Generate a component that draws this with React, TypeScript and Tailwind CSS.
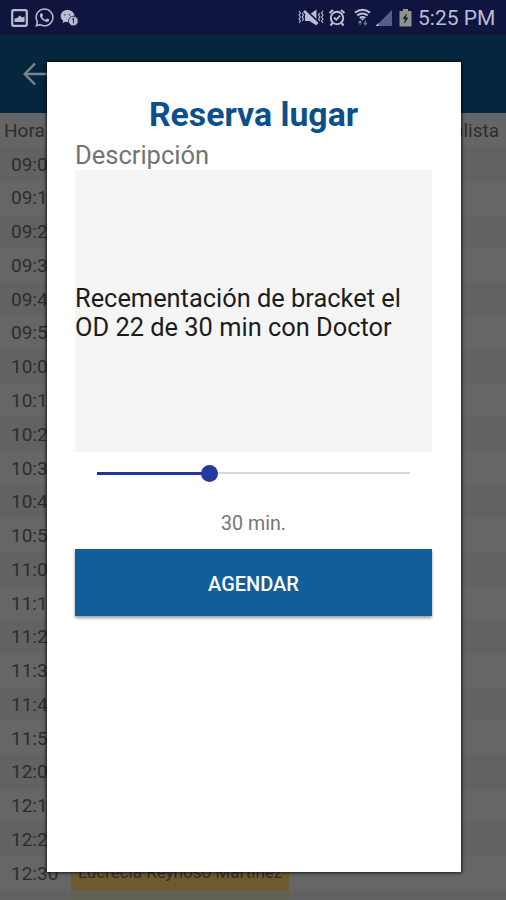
import { useState } from "react";
import { FaWhatsapp } from "react-icons/fa";
import { clsx } from "clsx";

const hours = ["09", "10", "11", "12"];
const minutes = ["00", "10", "20", "30", "40", "50"];

const slots = hours
  .flatMap((hour) => minutes.map((minute) => `${hour}:${minute}`))
  .slice(0, 23);

const appointments: Record<string, string> = {
  "12:30": "Lucrecia Reynoso Martínez",
};

function StatusBar() {
  return (
    <header className="flex h-[35px] shrink-0 items-center bg-[#10153f] pr-[10px] pl-[11px] text-[#b9bdd2]">
      <svg width="17" height="18" viewBox="0 0 17 18" fill="none">
        <rect x="1.2" y="1.2" width="14.6" height="15.6" rx="1.5" stroke="currentColor" strokeWidth="2.2" />
        <path d="M3.5 13V9.500l2.500-.5L9 6.500l2 2 2.500-1V13z" fill="currentColor" />
      </svg>
      <FaWhatsapp className="ml-[6px] size-[21px]" />
      <svg className="ml-[5px]" width="19" height="18" viewBox="0 0 19 18">
        <path
          d="M7.5 1C3.5 1 .7 3.6.7 7c0 2 .9 3.5 2.4 4.6L2.5 14l2.8-1.3c.8.2 1.5.3 2.3.3 4 0 6.9-2.7 6.9-6S11.500 1 7.500 1z"
          fill="currentColor"
        />
        <circle cx="13.300" cy="12" r="4.800" fill="currentColor" stroke="#383d62" strokeWidth="1" />
        <path d="M12.300 10.500l1.200-1v5" fill="none" stroke="#383d62" strokeWidth="1.200" />
        <path d="M5 5v1.500M9.500 5v1.500" fill="none" stroke="#383d62" strokeWidth="1.200" />
      </svg>

      <svg className="ml-auto" width="28" height="20" viewBox="0 0 28 20" fill="none" stroke="currentColor">
        <path
          d="M2 3l1.500 2L2 7l1.500 2L2 11l1.500 2L2 15M5.200 5l1.300 2-1.300 2 1.300 2-1.300 2M26 3l-1.500 2L26 7l-1.500 2 1.500 2-1.500 2 1.500 2M22.800 5l-1.300 2 1.300 2-1.300 2 1.300 2"
          strokeWidth="1.100"
        />
        <path d="M8 6.500h4.500L19.500 1.500v16L12.500 13H8z" fill="currentColor" stroke="none" />
        <path d="M9.500 3l13 12" stroke="#10153f" strokeWidth="2" />
        <path d="M7 3l13.500 13" strokeWidth="2.800" />
      </svg>
      <svg className="ml-[3px]" width="18" height="19" viewBox="0 0 18 19" fill="none" stroke="currentColor">
        <circle cx="9" cy="10" r="6.200" strokeWidth="2" />
        <path d="M1.500 5L5 2M16.500 5L13 2M4.500 15l-2 2.500M13.500 15l2 2.500" strokeWidth="2.200" />
        <path d="M6 9.500l2.300 2.200 3.800-4" strokeWidth="1.800" />
      </svg>
      <svg className="ml-[8px]" width="17" height="19" viewBox="0 0 18 19" fill="none" stroke="currentColor">
        <path
          d="M1 4.300c5-3.700 11-3.700 16 0M3.500 7.200c3.500-2.500 7.500-2.500 11 0M6 10c1.800-1.300 4.200-1.300 6 0"
          strokeWidth="2.100"
        />
        <path d="M7 10.500h4L9 13z" fill="currentColor" stroke="none" />
        <path d="M6.500 13v4.500M4.500 15.500l2-2.500 1.500 2M12 12.500V17M10.500 15.200l1.500 2 1.500-2" stroke="#747a9c" strokeWidth="1.200" />
      </svg>
      <svg className="ml-[4px]" width="18" height="18" viewBox="0 0 18 18">
        <path d="M17 1v16H1z" fill="#585d83" />
        <path d="M3.500 14V17H.500z" fill="currentColor" />
      </svg>
      <svg className="ml-[6px]" width="13" height="18" viewBox="0 0 13 18">
        <path d="M4 0h5v2h3.500v15.500H.500V2H4z" fill="#8e9290" />
        <path d="M8 4L3.500 10H6l-1 5 4.500-6.500H7z" fill="#171b3b" />
      </svg>
      <time className="ml-[6px] w-[78px] pt-px text-[21px] leading-none whitespace-nowrap">5:25 PM</time>
    </header>
  );
}

function Toolbar() {
  return (
    <nav className="flex h-[78px] shrink-0 items-center bg-[#05263f] pl-[23px] text-[#7c8584]">
      <svg width="28" height="24" viewBox="0 0 28 24" fill="none" stroke="currentColor" strokeWidth="2.500">
        <path d="M12 1.500L1.800 12 12 22.500M2 12h26" />
      </svg>
    </nav>
  );
}

function Schedule() {
  return (
    <main className="bg-[#656565] text-[19px] text-[#2d2d2d]">
      <div className="flex h-[34px] items-center justify-between pt-[2px] pr-[7px] pl-1">
        <span>Hora</span>
        <span>Especialista</span>
      </div>
      {slots.map((slot, index) => (
        <div
          key={slot}
          className={clsx(
            "flex h-[33.77px] items-center pl-[11px]",
            index % 2 === 0 ? "bg-[#626262]" : "bg-[#666666]",
          )}
        >
          <span className="w-[60px] pt-[2px]">{slot}</span>
          {appointments[slot] && (
            <span className="flex h-full w-[218px] items-center bg-[#6f5a30] pl-[7px] text-[17px] whitespace-nowrap">
              {appointments[slot]}
            </span>
          )}
          {slot === "12:40" && <span className="h-full w-[218px] bg-[#606253]" />}
        </div>
      ))}
    </main>
  );
}

function DurationSlider(props: { value: number; onChange: (value: number) => void }) {
  const percent = ((props.value - 10) / 55.5) * 100;

  return (
    <label className="relative mx-[22px] flex h-[42px] items-center">
      <span className="h-[3px] bg-[#22359a]" style={{ width: `${percent}%` }} />
      <span className="relative z-10 -mr-[8.5px] -ml-[8.5px] size-[17px] shrink-0 rounded-full bg-[#2736a0]" />
      <span className="h-[2px] flex-1 bg-[#d7d7d7]" />
      <input
        type="range"
        min={10}
        max={65}
        value={props.value}
        onChange={(event) => props.onChange(Number(event.target.value))}
        className="absolute inset-0 z-20 cursor-pointer opacity-0"
      />
    </label>
  );
}

function BookingDialog() {
  const [duration, setDuration] = useState(30);

  return (
    <section className="absolute top-[62px] left-[46.5px] flex h-[810px] w-[414px] flex-col bg-white px-[28.5px] pt-[33px] shadow-[0_0_3px_1px_rgba(0,0,0,0.75)]">
      <h1 className="text-center text-[33.8px] leading-[40px] font-bold text-[#0b4f8c]">
        Reserva lugar
      </h1>
      <h2 className="mt-[5px] text-[25.5px] leading-[30px] text-[#737373]">Descripción</h2>
      <p className="flex h-[282px] items-center bg-[#f5f5f5] pt-[4px] text-[25.4px] leading-[29.5px] text-[#1c1c1c]">
        Recementación de bracket el OD 22 de 30 min con Doctor
      </p>
      <DurationSlider value={duration} onChange={setDuration} />
      <output className="mt-[18px] text-center text-[19.6px] leading-[24px] text-[#757575]">
        {duration} min.
      </output>
      <button className="mt-[13px] h-[67px] shrink-0 bg-[#125e9b] pt-[2px] text-[20px] font-medium text-white shadow-[0_2px_3px_rgba(0,0,0,0.4)]">
        AGENDAR
      </button>
    </section>
  );
}

export default function App() {
  return (
    <div className="relative flex h-[900px] w-[506px] flex-col overflow-hidden bg-[#646464] font-[Roboto,sans-serif]">
      <StatusBar />
      <Toolbar />
      <Schedule />
      <BookingDialog />
    </div>
  );
}
